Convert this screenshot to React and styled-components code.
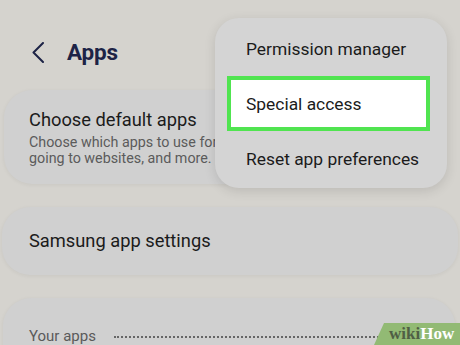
import React from "react";
import styled, { createGlobalStyle } from "styled-components";

const Global = createGlobalStyle`
  html, body { margin: 0; padding: 0; }
  body { background: #d5d3ce; font-family: Roboto, "Noto Sans", Arial, sans-serif; }
`;

const Page = styled.div`
  position: relative;
  width: 460px;
  height: 345px;
  overflow: hidden;
  background: #d5d3ce;
`;

const Header = styled.header`
  box-sizing: border-box;
  height: 90px;
  padding: 14px 0 0 32px;
  display: flex;
  align-items: center;
  gap: 23px;
`;

const Title = styled.h1`
  margin: 0;
  font-size: 22.5px;
  font-weight: 700;
  color: #1d2346;
  letter-spacing: -0.2px;
`;

const List = styled.div`
  display: flex;
  flex-direction: column;
  gap: 23px;
`;

const Card = styled.div`
  box-sizing: border-box;
  margin-left: ${(p) => p.$left}px;
  width: ${(p) => p.$width}px;
  height: ${(p) => p.$height}px;
  padding: ${(p) => p.$pad};
  background: #d0d0d0;
  border-radius: 28px;
  box-shadow: 0 1px 4px rgba(0, 0, 0, 0.06);
  display: flex;
  flex-direction: column;
  justify-content: ${(p) => (p.$center ? "center" : "flex-start")};
`;

const CardTitle = styled.div`
  font-size: 18.3px;
  line-height: 22px;
  color: #1b1b1b;
`;

const CardSub = styled.div`
  margin-top: 3px;
  font-size: 14.3px;
  line-height: 16px;
  color: #5b5b5b;
`;

const Row = styled.div`
  display: flex;
  align-items: center;
`;

const RowLabel = styled.div`
  font-size: 15px;
  line-height: 18px;
  color: #5a5a5a;
`;

const Dots = styled.div`
  flex: 1;
  margin-left: 18px;
  border-bottom: 2px dotted #666;
  transform: translateY(1px);
`;

const Menu = styled.div`
  position: absolute;
  left: 215px;
  top: 18px;
  width: 232px;
  box-sizing: border-box;
  padding: 3px 0 2px;
  background: #d4d4d4;
  border-radius: 24px;
  box-shadow: 0 3px 12px rgba(0, 0, 0, 0.12);
  display: flex;
  flex-direction: column;
`;

const MenuItem = styled.div`
  box-sizing: border-box;
  height: 55px;
  display: flex;
  align-items: center;
  font-size: 17.4px;
  color: #1b1b1b;
  padding-left: ${(p) => (p.$active ? 15 : 31)}px;
  margin: ${(p) => (p.$active ? "0 17px 0 12px" : "0")};
  background: ${(p) => (p.$active ? "#ffffff" : "transparent")};
  border: ${(p) => (p.$active ? "4px solid #50e450" : "none")};
`;

const Badge = styled.div`
  position: absolute;
  right: 0;
  bottom: 0;
  width: 86px;
  height: 22px;
  background: #92ba74;
  clip-path: polygon(10px 0, 100% 0, 100% 100%, 0 100%);
  display: flex;
  align-items: center;
  padding-left: 15px;
  box-sizing: border-box;
  font-family: "Liberation Serif", "DejaVu Serif", serif;
  font-weight: 700;
  font-size: 17px;
`;

const Wiki = styled.span`
  color: #4f5f45;
`;

const How = styled.span`
  color: #ffffff;
`;

const Chevron = () => (
  <svg width="12" height="21" viewBox="0 0 12 21">
    <polyline points="11,1 1.5,10.5 11,20" fill="none" stroke="#1d2346" strokeWidth="2" strokeLinecap="round" strokeLinejoin="round" />
  </svg>
);

export default function App() {
  return (
    <Page>
      <Global />
      <Header>
        <Chevron />
        <Title>Apps</Title>
      </Header>
      <List>
        <Card $left={4} $width={428} $height={94} $pad="19px 0 0 25px">
          <CardTitle>Choose default apps</CardTitle>
          <CardSub>
            Choose which apps to use for
            <br />
            going to websites, and more.
          </CardSub>
        </Card>
        <Card $left={2} $width={456} $height={68} $pad="0 0 0 27px" $center>
          <CardTitle>Samsung app settings</CardTitle>
        </Card>
        <Card $left={3} $width={452} $height={100} $pad="29px 0 0 26px">
          <Row>
            <RowLabel>Your apps</RowLabel>
            <Dots />
          </Row>
        </Card>
      </List>
      <Menu>
        <MenuItem>Permission manager</MenuItem>
        <MenuItem $active>Special access</MenuItem>
        <MenuItem>Reset app preferences</MenuItem>
      </Menu>
      <Badge>
        <Wiki>wiki</Wiki>
        <How>How</How>
      </Badge>
    </Page>
  );
}
